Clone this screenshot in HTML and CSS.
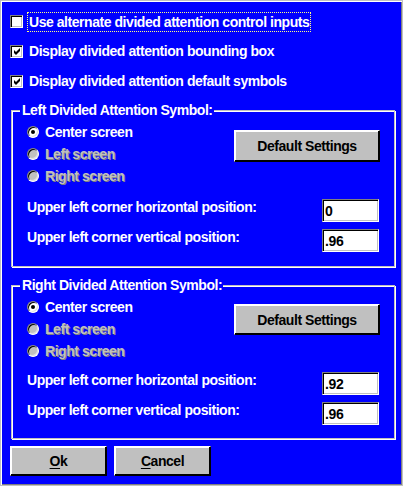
FILE: index.html
```html
<!DOCTYPE html>
<html>
<head>
<meta charset="utf-8">
<link rel="stylesheet" href="styles.css">
</head>
<body>
<div class="window">
  <div class="checks">
    <div class="check-row">
      <span class="checkbox"></span>
      <span class="check-label focus">Use alternate divided attention control inputs</span>
    </div>
    <div class="check-row">
      <span class="checkbox"><svg class="tick" width="9" height="9" viewBox="0 0 9 9"><path d="M1 3 L3 5 L7 1 L7 4 L3 8 L1 6 Z" fill="#000"/></svg></span>
      <span class="check-label">Display divided attention bounding box</span>
    </div>
    <div class="check-row">
      <span class="checkbox"><svg class="tick" width="9" height="9" viewBox="0 0 9 9"><path d="M1 3 L3 5 L7 1 L7 4 L3 8 L1 6 Z" fill="#000"/></svg></span>
      <span class="check-label">Display divided attention default symbols</span>
    </div>
  </div>

  <div class="group group-left">
    <div class="group-title">Left Divided Attention Symbol:</div>
    <div class="group-top">
      <div class="radios">
        <div class="radio-row"><span class="radio on"></span><span>Center screen</span></div>
        <div class="radio-row disabled"><span class="radio"></span><span>Left screen</span></div>
        <div class="radio-row disabled"><span class="radio"></span><span>Right screen</span></div>
      </div>
      <div class="btn btn-default">Default Settings</div>
    </div>
    <div class="field-row first"><span class="field-label">Upper left corner horizontal position:</span><span class="field">0</span></div>
    <div class="field-row"><span class="field-label">Upper left corner vertical position:</span><span class="field">.96</span></div>
  </div>

  <div class="group group-right">
    <div class="group-title">Right Divided Attention Symbol:</div>
    <div class="group-top">
      <div class="radios">
        <div class="radio-row"><span class="radio on"></span><span>Center screen</span></div>
        <div class="radio-row disabled"><span class="radio"></span><span>Left screen</span></div>
        <div class="radio-row disabled"><span class="radio"></span><span>Right screen</span></div>
      </div>
      <div class="btn btn-default">Default Settings</div>
    </div>
    <div class="field-row first"><span class="field-label">Upper left corner horizontal position:</span><span class="field">.92</span></div>
    <div class="field-row"><span class="field-label">Upper left corner vertical position:</span><span class="field">.96</span></div>
  </div>

  <div class="actions">
    <div class="btn btn-action"><u>O</u>k</div>
    <div class="btn btn-action"><u>C</u>ancel</div>
  </div>
</div>
</body>
</html>
```

FILE: styles.css
```css
html, body {
  margin: 0;
  padding: 0;
  background: #0000ff;
}

.window {
  width: 403px;
  height: 486px;
  box-sizing: border-box;
  background: #0000ff;
  border: 1px solid #c0c0c0;
  box-shadow: inset 1px 1px 0 #ffffff, inset -1px -1px 0 #808080;
  padding: 5px 6px 0 9px;
  font-family: "Liberation Sans", Arial, sans-serif;
  font-weight: bold;
  font-size: 14px;
  line-height: 16px;
  letter-spacing: -0.45px;
  color: #ffffff;
}

.checks {
  display: flex;
  flex-direction: column;
}

.check-row {
  height: 30px;
  display: flex;
  align-items: center;
}

.check-row:first-child {
  padding-top: 1px;
  box-sizing: border-box;
}

.checkbox {
  width: 13px;
  height: 13px;
  box-sizing: border-box;
  background: #ffffff;
  border: 1px solid;
  border-color: #808080 #ffffff #ffffff #808080;
  box-shadow: inset 1px 1px 0 #000000, inset -1px -1px 0 #c0c0c0;
  display: flex;
  align-items: center;
  justify-content: center;
  flex: none;
}

.tick {
  display: block;
  margin: 1px 0 0 1px;
}

.check-label {
  margin-left: 4px;
  padding: 1px 1px 1px 1px;
  border: 1px solid transparent;
}

.check-label.focus {
  border: 1px dotted #ffff80;
}

.group {
  position: relative;
  width: 384px;
  box-sizing: border-box;
  margin-left: 1px;
  border: 1px solid #c0c0c0;
  box-shadow: inset 1px 1px 0 #ffffff, 1px 1px 0 #ffffff;
  padding: 10px 14px 14px 15px;
}

.group-left {
  margin-top: 14px;
}

.group-right {
  margin-top: 18px;
  padding-bottom: 13px;
}

.group-right .field-row.first {
  margin-top: 10px;
}

.group-right .btn-default {
  margin-top: 8px;
  height: 31px;
}

.group-title {
  position: absolute;
  top: -9px;
  left: 8px;
  padding: 0 1px 0 2px;
  background: #0000ff;
}

.group-top {
  display: flex;
  justify-content: space-between;
  align-items: flex-start;
}

.radios {
  display: flex;
  flex-direction: column;
}

.radio-row {
  height: 22px;
  display: flex;
  align-items: center;
}

.radio {
  position: relative;
  width: 12px;
  height: 12px;
  box-sizing: border-box;
  border-radius: 50%;
  background: #c0c0c0;
  border: 1px solid;
  border-color: #808080 #ffffff #ffffff #808080;
  box-shadow: inset 1px 1px 0 #000000, inset -1px -1px 0 #dfdfdf;
  margin-right: 6px;
  flex: none;
}

.radio.on {
  background: #ffffff;
}

.radio.on::after {
  content: "";
  position: absolute;
  left: 3px;
  top: 3px;
  width: 4px;
  height: 4px;
  border-radius: 50%;
  background: #000000;
}

.radio-row.disabled {
  color: #c0c0c0;
  text-shadow: 1px 1px 0 #808080;
}

.btn {
  box-sizing: border-box;
  background: #c0c0c0;
  color: #000000;
  border: 1px solid;
  border-color: #ffffff #000000 #000000 #ffffff;
  box-shadow: inset -1px -1px 0 #000000, inset 1px 1px 0 #ffffff;
  display: flex;
  align-items: center;
  justify-content: center;
}

.btn-default {
  width: 146px;
  height: 32px;
  margin-top: 9px;
}

.field-row {
  display: flex;
  align-items: flex-start;
  justify-content: space-between;
  margin-top: 7px;
}

.field-label {
  padding-top: 0;
}

.field-row.first {
  margin-top: 12px;
}

.field {
  width: 57px;
  height: 23px;
  box-sizing: border-box;
  background: #ffffff;
  color: #000000;
  border: 1px solid;
  border-color: #808080 #ffffff #ffffff #808080;
  box-shadow: inset 1px 1px 0 #000000, inset -1px -1px 0 #c0c0c0;
  padding: 3px 0 0 2px;
  margin-right: 1px;
  letter-spacing: -0.3px;
}

.actions {
  display: flex;
  gap: 7px;
  margin-top: 7px;
}

.btn-action {
  width: 97px;
  height: 30px;
}

.btn-action u {
  text-decoration-thickness: 1px;
  text-underline-offset: 2px;
}
```
